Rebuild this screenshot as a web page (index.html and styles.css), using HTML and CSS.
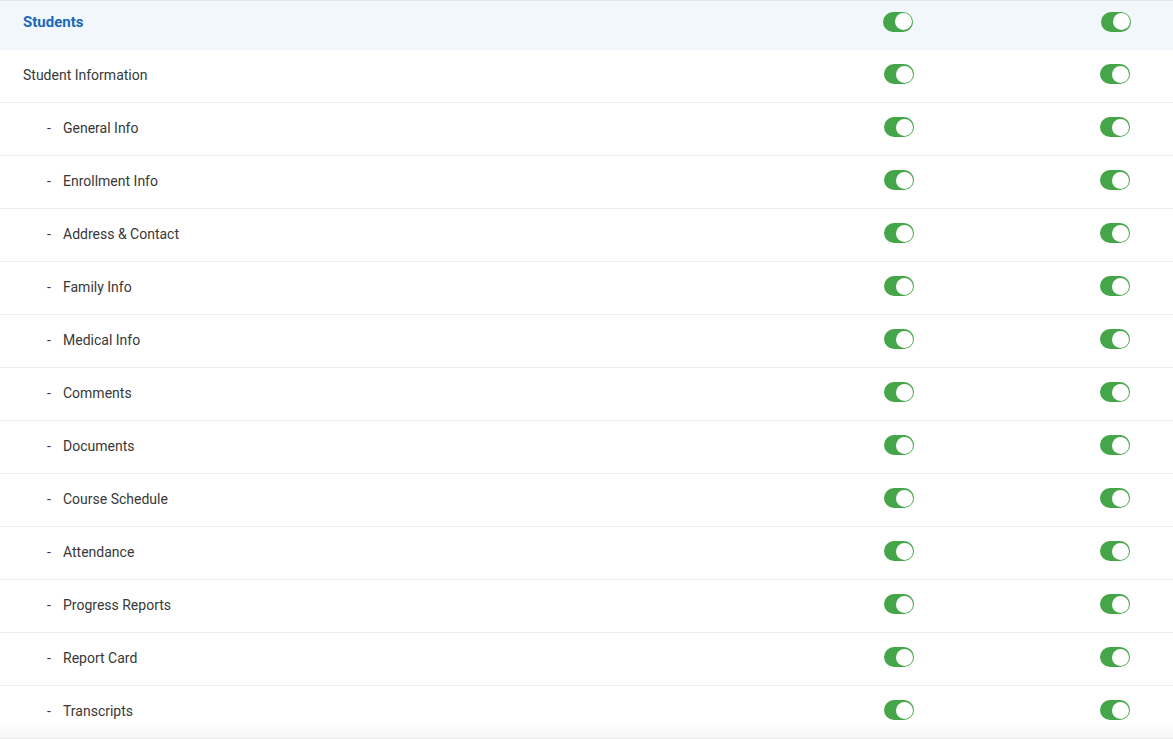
FILE: index.html
```html
<!DOCTYPE html>
<html lang="en">
<head>
<meta charset="utf-8">
<title>Permissions</title>
<link rel="stylesheet" href="styles.css">
</head>
<body>
<div class="perm-table">
  <div class="row header">
    <div class="name">Students</div>
    <div class="cell c1"><span class="toggle on"></span></div>
    <div class="cell c2"><span class="toggle on"></span></div>
  </div>
  <div class="row">
    <div class="name">Student Information</div>
    <div class="cell c1"><span class="toggle on"></span></div>
    <div class="cell c2"><span class="toggle on"></span></div>
  </div>
  <div class="row sub">
    <div class="name"><span class="dash">-</span>General Info</div>
    <div class="cell c1"><span class="toggle on"></span></div>
    <div class="cell c2"><span class="toggle on"></span></div>
  </div>
  <div class="row sub">
    <div class="name"><span class="dash">-</span>Enrollment Info</div>
    <div class="cell c1"><span class="toggle on"></span></div>
    <div class="cell c2"><span class="toggle on"></span></div>
  </div>
  <div class="row sub">
    <div class="name"><span class="dash">-</span>Address &amp; Contact</div>
    <div class="cell c1"><span class="toggle on"></span></div>
    <div class="cell c2"><span class="toggle on"></span></div>
  </div>
  <div class="row sub">
    <div class="name"><span class="dash">-</span>Family Info</div>
    <div class="cell c1"><span class="toggle on"></span></div>
    <div class="cell c2"><span class="toggle on"></span></div>
  </div>
  <div class="row sub">
    <div class="name"><span class="dash">-</span>Medical Info</div>
    <div class="cell c1"><span class="toggle on"></span></div>
    <div class="cell c2"><span class="toggle on"></span></div>
  </div>
  <div class="row sub">
    <div class="name"><span class="dash">-</span>Comments</div>
    <div class="cell c1"><span class="toggle on"></span></div>
    <div class="cell c2"><span class="toggle on"></span></div>
  </div>
  <div class="row sub">
    <div class="name"><span class="dash">-</span>Documents</div>
    <div class="cell c1"><span class="toggle on"></span></div>
    <div class="cell c2"><span class="toggle on"></span></div>
  </div>
  <div class="row sub">
    <div class="name"><span class="dash">-</span>Course Schedule</div>
    <div class="cell c1"><span class="toggle on"></span></div>
    <div class="cell c2"><span class="toggle on"></span></div>
  </div>
  <div class="row sub">
    <div class="name"><span class="dash">-</span>Attendance</div>
    <div class="cell c1"><span class="toggle on"></span></div>
    <div class="cell c2"><span class="toggle on"></span></div>
  </div>
  <div class="row sub">
    <div class="name"><span class="dash">-</span>Progress Reports</div>
    <div class="cell c1"><span class="toggle on"></span></div>
    <div class="cell c2"><span class="toggle on"></span></div>
  </div>
  <div class="row sub">
    <div class="name"><span class="dash">-</span>Report Card</div>
    <div class="cell c1"><span class="toggle on"></span></div>
    <div class="cell c2"><span class="toggle on"></span></div>
  </div>
  <div class="row sub last">
    <div class="name"><span class="dash">-</span>Transcripts</div>
    <div class="cell c1"><span class="toggle on"></span></div>
    <div class="cell c2"><span class="toggle on"></span></div>
  </div>
</div>
</body>
</html>
```
FILE: styles.css
```css
html, body {
  margin: 0;
  padding: 0;
  background: #ffffff;
}
body {
  font-family: Roboto, "Liberation Sans", Arial, sans-serif;
  font-size: 14px;
  color: #383838;
}
.perm-table {
  border-top: 1px solid #e3e6ea;
  display: flex;
  flex-direction: column;
}
.row {
  display: flex;
  align-items: center;
  height: 52px;
  box-sizing: border-box;
  padding-bottom: 2px;
  border-bottom: 1px solid #eeeeee;
}
.row + .row {
  height: 53px;
}
.row.header {
  height: 49px;
  padding-bottom: 8px;
  background: #f2f7fb;
  border-bottom: none;
}
.row.header .name {
  font-weight: 700;
  font-size: 15px;
  color: #1c67b8;
}
.row.last {
  border-bottom: 1px solid #ececec;
  background: linear-gradient(to bottom, #ffffff 70%, #f7f7f7 100%);
}
.name {
  flex: 1;
  padding-left: 23px;
  display: flex;
  align-items: center;
}
.row.sub .name {
  padding-left: 47px;
}
.dash {
  width: 16px;
}
.cell {
  display: flex;
  justify-content: center;
  align-items: center;
  box-sizing: border-box;
}
.c1 {
  width: 316px;
}
.c2 {
  width: 116px;
}
.row.header .c1 {
  padding-right: 2px;
}
.row.header .c2 {
  padding-left: 2px;
}
.toggle {
  position: relative;
  display: inline-block;
  width: 30px;
  height: 20px;
  margin-bottom: 2px;
  border-radius: 10px;
  background: #45a549;
  box-sizing: border-box;
}
.row.header .toggle {
  margin-bottom: 0;
}
.toggle::after {
  content: "";
  position: absolute;
  top: 1.5px;
  right: 1.5px;
  width: 17px;
  height: 17px;
  border-radius: 50%;
  background: #ffffff;
}
```
